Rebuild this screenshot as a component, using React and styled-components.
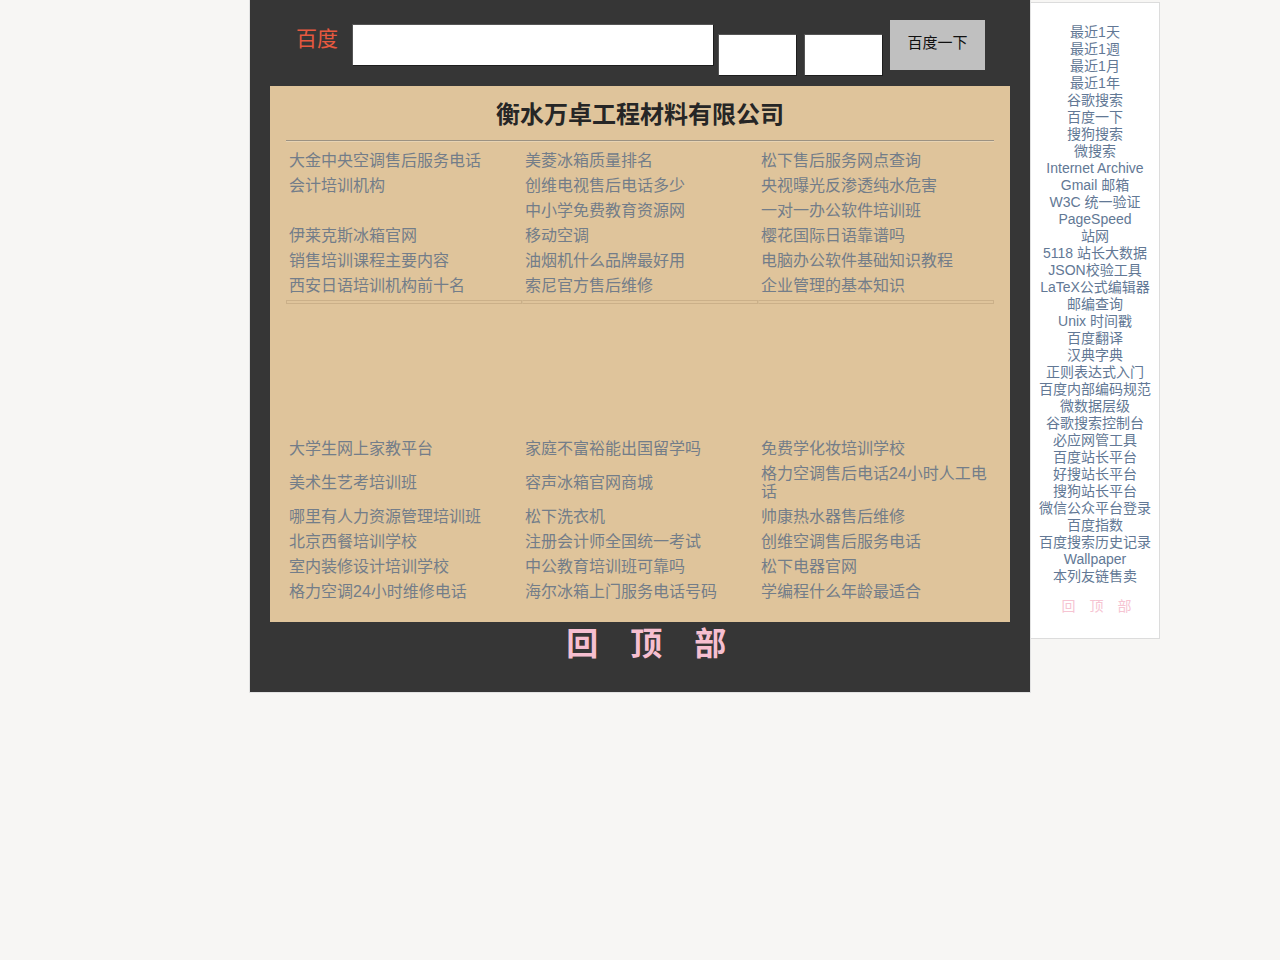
import React from "react";
import styled, { createGlobalStyle } from "styled-components";

const Global = createGlobalStyle`
  body {
    margin: 0;
    background: #f7f6f4;
    font-family: "Liberation Sans", "Noto Sans CJK SC", sans-serif;
  }
`;

const Page = styled.div`
  display: flex;
  align-items: flex-start;
  padding-left: 249px;
`;

const Main = styled.div`
  width: 782px;
  height: 693px;
  background: #363636;
  border-left: 1px solid #e2e2e2;
  border-right: 1px solid #e2e2e2;
  border-bottom: 1px solid #e2e2e2;
  box-sizing: border-box;
  display: flex;
  flex-direction: column;
`;

const SearchBar = styled.div`
  display: flex;
  align-items: flex-start;
  height: 86px;
  padding-left: 46px;
`;

const Logo = styled.span`
  color: #e6593f;
  font-size: 21px;
  line-height: 24px;
  margin-top: 27px;
  margin-right: 14px;
`;

const Field = styled.div`
  width: ${(p) => p.$w}px;
  height: ${(p) => p.$h}px;
  margin-top: ${(p) => p.$top}px;
  margin-right: ${(p) => p.$mr}px;
  background: #fff;
  border: 1px solid #1e1e1e;
  border-top-color: #555;
  border-left-color: #555;
  box-sizing: border-box;
`;

const Button = styled.div`
  width: 95px;
  height: 50px;
  margin-top: 20px;
  background: #c0c0c0;
  color: #111;
  font-size: 15px;
  display: flex;
  align-items: center;
  justify-content: center;
  padding-bottom: 7px;
  box-sizing: border-box;
`;

const Panel = styled.div`
  margin: 0 20px;
  background: #dfc49b;
  padding: 14px 16px 18px;
`;

const Title = styled.h1`
  margin: 0;
  text-align: center;
  font-size: 24px;
  line-height: 30px;
  font-weight: bold;
  color: #262626;
`;

const Rule = styled.div`
  margin-top: 10px;
  height: 1px;
  background: #9c9282;
  border-bottom: 1px solid #e7d3b3;
  margin-bottom: 6px;
`;

const Grid = styled.div`
  display: grid;
  grid-template-columns: repeat(3, 236px);
  align-items: center;
`;

const Cell = styled.a`
  display: block;
  padding: 3.5px 3px;
  font-size: 16px;
  line-height: 18px;
  color: #737d89;
  text-decoration: none;
`;

const Split = styled.div`
  display: grid;
  grid-template-columns: repeat(3, 236px);
  margin-top: 2px;
`;

const SplitCell = styled.div`
  height: 2px;
  border: 1px solid #cbb089;
  border-left-color: ${(p) => (p.$first ? "#cbb089" : "#d6bd96")};
`;

const Blank = styled.div`
  height: 132px;
`;

const BackTop = styled.div`
  margin-top: 2px;
  text-align: center;
  color: #f6bfd0;
  font-size: 32px;
  font-weight: bold;
  line-height: 40px;
  letter-spacing: 11.5px;
  padding-left: 24px;
`;

const Side = styled.div`
  width: 129px;
  height: 637px;
  margin-top: 2px;
  background: #fff;
  border: 1px solid #dcdcdc;
  border-left: none;
  box-sizing: border-box;
  padding-top: 21px;
  display: flex;
  flex-direction: column;
  align-items: center;
`;

const SideLink = styled.a`
  font-size: 14px;
  line-height: 17px;
  color: #627895;
  text-decoration: none;
  white-space: nowrap;
`;

const SideTop = styled.div`
  margin-top: 13px;
  font-size: 14px;
  line-height: 17px;
  color: #f6c4d2;
  letter-spacing: 5px;
  padding-left: 8px;
`;

const topRows = [
  ["大金中央空调售后服务电话", "美菱冰箱质量排名", "松下售后服务网点查询"],
  ["会计培训机构", "创维电视售后电话多少", "央视曝光反渗透纯水危害"],
  ["", "中小学免费教育资源网", "一对一办公软件培训班"],
  ["伊莱克斯冰箱官网", "移动空调", "樱花国际日语靠谱吗"],
  ["销售培训课程主要内容", "油烟机什么品牌最好用", "电脑办公软件基础知识教程"],
  ["西安日语培训机构前十名", "索尼官方售后维修", "企业管理的基本知识"],
];

const bottomRows = [
  ["大学生网上家教平台", "家庭不富裕能出国留学吗", "免费学化妆培训学校"],
  ["美术生艺考培训班", "容声冰箱官网商城", "格力空调售后电话24小时人工电话"],
  ["哪里有人力资源管理培训班", "松下洗衣机", "帅康热水器售后维修"],
  ["北京西餐培训学校", "注册会计师全国统一考试", "创维空调售后服务电话"],
  ["室内装修设计培训学校", "中公教育培训班可靠吗", "松下电器官网"],
  ["格力空调24小时维修电话", "海尔冰箱上门服务电话号码", "学编程什么年龄最适合"],
];

const sideLinks = [
  "最近1天", "最近1週", "最近1月", "最近1年", "谷歌搜索", "百度一下", "搜狗搜索",
  "微搜索", "Internet Archive", "Gmail 邮箱", "W3C 统一验证", "PageSpeed", "站网",
  "5118 站长大数据", "JSON校验工具", "LaTeX公式编辑器", "邮编查询", "Unix 时间戳",
  "百度翻译", "汉典字典", "正则表达式入门", "百度内部编码规范", "微数据层级",
  "谷歌搜索控制台", "必应网管工具", "百度站长平台", "好搜站长平台", "搜狗站长平台",
  "微信公众平台登录", "百度指数", "百度搜索历史记录", "Wallpaper", "本列友链售卖",
];

const LinkGrid = ({ rows }) => (
  <Grid>
    {rows.flat().map((t, i) => (
      <Cell key={i} href="#">{t}</Cell>
    ))}
  </Grid>
);

export default function App() {
  return (
    <>
      <Global />
      <Page>
        <Main>
          <SearchBar>
            <Logo>百度</Logo>
            <Field $w={362} $h={42} $top={24} $mr={4} />
            <Field $w={79} $h={42} $top={34} $mr={7} />
            <Field $w={79} $h={42} $top={34} $mr={7} />
            <Button>百度一下</Button>
          </SearchBar>
          <Panel>
            <Title>衡水万卓工程材料有限公司</Title>
            <Rule />
            <LinkGrid rows={topRows} />
            <Split>
              <SplitCell $first />
              <SplitCell />
              <SplitCell />
            </Split>
            <Blank />
            <LinkGrid rows={bottomRows} />
          </Panel>
          <BackTop>回 顶 部</BackTop>
        </Main>
        <Side>
          {sideLinks.map((t) => (
            <SideLink key={t} href="#">{t}</SideLink>
          ))}
          <SideTop>回 顶 部</SideTop>
        </Side>
      </Page>
    </>
  );
}
